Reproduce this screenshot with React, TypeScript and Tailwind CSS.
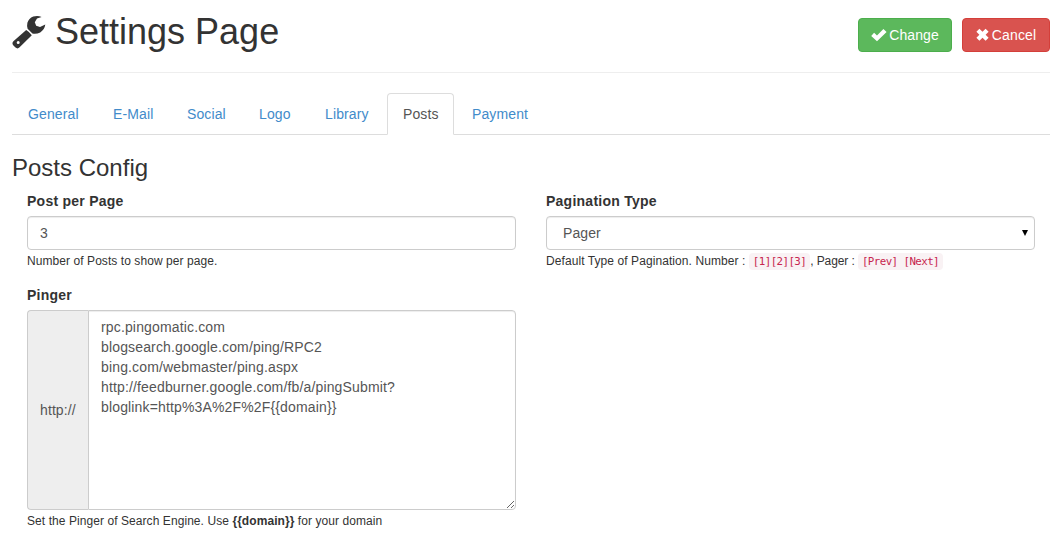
import type { ReactNode } from "react";

const tabs = [
  { label: "General", width: "w-[83px]" },
  { label: "E-Mail", width: "w-[72px]" },
  { label: "Social", width: "w-[70px]" },
  { label: "Logo", width: "w-[64px]" },
  { label: "Library", width: "w-[76px]" },
  { label: "Posts", width: "w-[67px]" },
  { label: "Payment", width: "w-[88px]" },
];

function WrenchIcon() {
  return (
    <svg className="mt-[15px] h-[34px] w-[34px] shrink-0" viewBox="0 0 34 34" fill="#333">
      <path
        fillRule="evenodd"
        d="M14.2 14.9Q17.8 17 19.8 20.2L7.6 32.3Q5.6 34.3 3.5 32.6L1.2 30.3Q-.4 28.2 1.4 26.3ZM6.2 26A1.5 1.5 0 1 0 6.2 29A1.5 1.5 0 1 0 6.2 26Z"
      />
      <path d="M29.6 1.9Q25.5 .2 21.2 1.6Q16.8 3.4 15.4 7.8Q14.7 11 15.6 13.7L20.4 18.5Q24.5 19.3 28.2 17.4Q32.6 14.8 33.3 9.6L28 11.9L24.2 10.8L22.8 7.2L25 3.6Z" />
    </svg>
  );
}

function CheckIcon() {
  return (
    <svg className="h-[14px] w-4" viewBox="0 0 16 14" fill="currentColor">
      <path d="M.2 8L3.1 4.8L6 7.5L12.4 1.1L15.6 4L6 13.3Z" />
    </svg>
  );
}

function CrossIcon() {
  return (
    <svg className="h-[14px] w-[13px]" viewBox="0 0 13 14" fill="currentColor">
      <path d="M3.4 .7L6.5 3.8L9.6 .7L12.6 3.7L9.6 6.7L12.6 9.8L9.6 12.8L6.5 9.7L3.4 12.8L.4 9.8L3.4 6.7L.4 3.7Z" />
    </svg>
  );
}

function Label({ children }: { children: ReactNode }) {
  return <label className="mb-[5px] block h-5 font-bold tracking-[0.25px] text-[#333]">{children}</label>;
}

function Code({ children }: { children: ReactNode }) {
  return (
    <code className="rounded bg-[#f9f2f4] px-1 py-0.5 font-['DejaVu_Sans_Mono',monospace] text-[10.8px] tracking-[-0.57px] text-[#c7254e]">
      {children}
    </code>
  );
}

export default function App() {
  return (
    <main className="h-[535px] w-[1064px] overflow-hidden bg-white pr-3.5 pl-3 font-['Liberation_Sans',Arial,sans-serif] text-sm leading-5 text-[#333]">
      <header className="flex h-[73px] border-b border-[#eee]">
        <WrenchIcon />
        <h1 className="mt-3 ml-[9px] text-4xl leading-10 whitespace-nowrap">Settings Page</h1>
        <div className="mt-[18px] ml-auto flex gap-2.5">
          <button className="flex h-[34px] w-[94px] items-center justify-center gap-[2px] rounded border border-[#4cae4c] bg-[#5cb85c] tracking-[0.1px] text-white">
            <CheckIcon />
            Change
          </button>
          <button className="flex h-[34px] w-[88px] items-center justify-center gap-[3px] rounded border border-[#d43f3a] bg-[#d9534f] tracking-[0.15px] text-white">
            <CrossIcon />
            Cancel
          </button>
        </div>
      </header>

      <nav className="mt-5 flex h-[42px] gap-0.5 border-b border-[#ddd]">
        {tabs.map(({ label, width }) => (
          <a
            key={label}
            className={`${width} h-[42px] shrink-0 rounded-t border pt-[10px] pl-[15px] tracking-[0.12px] ${
              label === "Posts" ? "border-[#ddd] border-b-white bg-white text-[#555]" : "border-transparent text-[#428bca]"
            }`}
          >
            {label}
          </a>
        ))}
      </nav>

      <h3 className="mt-5 mb-[10px] text-2xl leading-[26px]">Posts Config</h3>

      <div className="grid grid-cols-2 gap-x-[30px] px-[15px]">
        <div>
          <Label>Post per Page</Label>
          <input
            defaultValue="3"
            className="block h-[34px] w-full rounded border border-[#ccc] px-3 text-[#555] shadow-[inset_0_1px_1px_rgba(0,0,0,0.075)] outline-none"
          />
          <p className="h-[35px] text-xs leading-[22px] tracking-[0.07px]">Number of Posts to show per page.</p>
        </div>
        <div>
          <Label>Pagination Type</Label>
          <button className="flex h-[34px] w-full items-center justify-between rounded border border-[#ccc] pr-[6px] pl-4 tracking-[0.1px] text-[#555] shadow-[inset_0_1px_1px_rgba(0,0,0,0.075)]">
            Pager
            <svg className="h-[6px] w-[6px]" viewBox="0 0 6 6" fill="#000">
              <path d="M0 0H6L3 6Z" />
            </svg>
          </button>
          <p className="h-[35px] text-xs leading-[22px] tracking-[0.08px] whitespace-nowrap">
            Default Type of Pagination. Number : <Code>[1][2][3]</Code>
            <span className="tracking-[-0.1px]">, Pager : </span>
            <Code>[Prev] [Next]</Code>
          </p>
        </div>
        <div>
          <Label>Pinger</Label>
          <div className="flex h-[200px]">
            <span className="flex w-[61px] items-center rounded-l border border-r-0 border-[#ccc] bg-[#eee] pl-3 tracking-[0.1px] text-[#555]">
              http://
            </span>
            <textarea
              spellCheck={false}
              className="h-full flex-1 resize rounded-r border border-[#ccc] px-3 py-1.5 tracking-[0.15px] text-[#555] shadow-[inset_0_1px_1px_rgba(0,0,0,0.075)] outline-none"
              defaultValue={
                "rpc.pingomatic.com\nblogsearch.google.com/ping/RPC2\nbing.com/webmaster/ping.aspx\nhttp://feedburner.google.com/fb/a/pingSubmit?\nbloglink=http%3A%2F%2F{{domain}}"
              }
            />
          </div>
          <p className="text-xs leading-[22px] tracking-[0.07px]">
            Set the Pinger of Search Engine. Use <b>{"{{domain}}"}</b> for your domain
          </p>
        </div>
      </div>
    </main>
  );
}
